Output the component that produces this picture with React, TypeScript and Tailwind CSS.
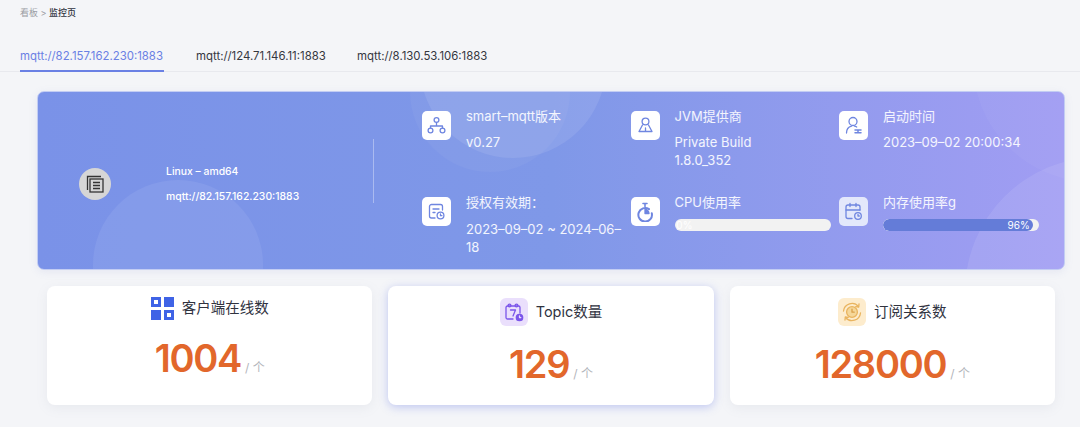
import type { ReactNode } from "react"

const font = "font-['Inter','Noto_Sans_CJK_SC',sans-serif]"

function IconBox({ children, className = "bg-white" }: { children: ReactNode; className?: string }) {
  return (
    <div className={`flex h-[29px] w-[29px] shrink-0 items-center justify-center rounded-[5px] ${className}`}>
      <svg width="21" height="21" viewBox="0 0 21 21" fill="none" stroke="#6f86e0" strokeWidth="1.3" strokeLinecap="round" strokeLinejoin="round">
        {children}
      </svg>
    </div>
  )
}

function InfoItem({ icon, title, children, boxClass }: { icon: ReactNode; title: string; children: ReactNode; boxClass?: string }) {
  return (
    <div className="flex gap-[15px]">
      <div className="pt-[4px]">
        <IconBox className={boxClass}>{icon}</IconBox>
      </div>
      <div className="min-w-0 flex-1 text-[13px] leading-[18px] text-white/90">
        <div className="h-[26px]">{title}</div>
        <div className="pt-[1px]">{children}</div>
      </div>
    </div>
  )
}

function Progress({ percent, label }: { percent: number; label: string }) {
  return (
    <div className="mt-[-1px] h-[12px] w-[156px] overflow-hidden rounded-full bg-[#f2f2f2]">
      <div
        className={`flex h-full items-center justify-end rounded-full pr-[3px] text-[10px] leading-none text-white ${percent > 0 ? "bg-[#647cd8]" : ""}`}
        style={{ width: percent > 0 ? `${percent}%` : "21px" }}
      >
        {label}
      </div>
    </div>
  )
}

function StatCard({ icon, title, value, className = "", headerClass = "pt-[12px]", valueClass = "mt-[14px]" }: { icon: ReactNode; title: string; value: string; className?: string; headerClass?: string; valueClass?: string }) {
  return (
    <div className={`h-[119px] flex-1 rounded-[8px] bg-white ${className}`}>
      <div className={`flex items-center justify-center gap-[8px] text-[14.5px] leading-[28px] text-[#30333f] ${headerClass}`}>
        {icon}
        <span>{title}</span>
      </div>
      <div className={`flex items-baseline justify-center ${valueClass}`}>
        <span className="text-[38px] font-semibold leading-[48px] tracking-[-1.3px] text-[#e2672b]">{value}</span>
        <span className="ml-[4px] text-[12px] text-[#b3b5bb]">/ 个</span>
      </div>
    </div>
  )
}

export default function App() {
  return (
    <div className={`h-[427px] w-[1080px] overflow-hidden bg-[#f4f5f8] ${font}`}>
      <div className="px-5 pt-[6px] text-[9px] leading-[13px] text-[#9a9ca3]">
        看板 &gt; <span className="font-medium text-[#30333f]">监控页</span>
      </div>

      <div className="mt-[25px] flex h-[28px] gap-[32px] border-b border-[#e8e9ee] px-5 text-[11.4px] leading-[24px] text-[#35373e]">
        <div className="h-[28px] w-[144px] whitespace-nowrap border-b-2 border-[#6a80e4] text-[#6a80e4]">mqtt://82.157.162.230:1883</div>
        <div className="w-[129px] whitespace-nowrap">mqtt://124.71.146.11:1883</div>
        <div className="w-[130px] whitespace-nowrap">mqtt://8.130.53.106:1883</div>
      </div>

      <div className="relative ml-[37px] mt-[19px] flex h-[179px] w-[1028px] overflow-hidden rounded-[7px] border border-[#c3cdf3] bg-gradient-to-r from-[#7a92e8] via-[#7f98e8] to-[#a19df3] shadow-[0_2px_8px_rgba(120,130,200,0.12)]">
        <div className="absolute left-[55px] top-[88px] h-[200px] w-[170px] rounded-full bg-white/[0.07]" />
        <div className="absolute left-[372px] top-[-110px] h-[190px] w-[160px] rounded-full bg-white/[0.04]" />
        <div className="absolute left-[382px] top-[-130px] h-[196px] w-[186px] rounded-full bg-white/[0.09]" />
        <div className="absolute left-[927px] top-[65px] h-[270px] w-[270px] rounded-full bg-white/[0.09]" />
        <div className="absolute left-[935px] top-[-150px] h-[240px] w-[240px] rounded-full bg-white/[0.04]" />

        <div className="relative flex w-[336px] items-center pl-[41px] pt-[6px]">
          <div className="flex h-8 w-8 items-center justify-center rounded-full bg-[#d6d6d6]">
            <svg width="22" height="22" viewBox="0 0 22 22" fill="none" stroke="#333" strokeWidth="1.3">
              <path d="M17 3.5H3.5V17" />
              <rect x="6" y="6" width="13" height="13" />
              <path d="M9 9.5h7M9 12.5h7M9 15.5h7" strokeWidth="1.6" />
            </svg>
          </div>
          <div className="ml-[55px] text-[10.4px] font-medium leading-[25px] text-white">
            <div>Linux – amd64</div>
            <div>mqtt://82.157.162.230:1883</div>
          </div>
          <div className="absolute right-0 top-[47px] h-[64px] w-px bg-white/35" />
        </div>

        <div className="relative grid flex-1 grid-cols-[208.5px_208.5px_1fr] grid-rows-[86px_1fr] pl-[48px] pt-[15px]">
          <InfoItem
            title="smart–mqtt版本"
            icon={
              <>
                <circle cx="10.5" cy="5" r="2.4" />
                <circle cx="4.5" cy="15.5" r="2.4" />
                <circle cx="16.5" cy="15.5" r="2.4" />
                <path d="M10.5 7.5v3.5M4.5 13v-2h12v2" />
              </>
            }
          >
            <div className="-mt-[1px]">v0.27</div>
          </InfoItem>
          <InfoItem
            title="JVM提供商"
            icon={
              <>
                <circle cx="10.5" cy="6.5" r="3.4" />
                <path d="M7.5 10 4 16.5h13L13.5 10M10.5 13v3.5" />
              </>
            }
          >
            <div className="-mt-[1px]">Private Build</div>
            <div>1.8.0_352</div>
          </InfoItem>
          <InfoItem
            title="启动时间"
            icon={
              <>
                <circle cx="10" cy="6.5" r="4" />
                <path d="M3.5 18c0-3.6 2-6 5-6.8M11.500 11.200c.8.100 1.600.400 2.200.800" />
                <path d="M12 15h6M12 17.800h6M15 15v2.800" strokeWidth="1.500" />
              </>
            }
          >
            <div className="-mt-[1px]">2023–09–02 20:00:34</div>
          </InfoItem>
          <InfoItem
            title="授权有效期："
            icon={
              <>
                <path d="M9 17H5.500a2 2 0 0 1-2-2V5.500a2 2 0 0 1 2-2h9a2 2 0 0 1 2 2V9" />
                <path d="M7 8h6M7 11.500h2" />
                <circle cx="14.500" cy="14.500" r="3.400" />
                <path d="M14.500 13v1.700h1.400" />
              </>
            }
          >
            2023–09–02 ~ 2024–06–18
          </InfoItem>
          <InfoItem
            title="CPU使用率"
            icon={
              <>
                <path d="M8 2.500h4M10 2.500v3" strokeWidth="1.600" />
                <path d="M14 8.200A6.800 6.800 0 1 0 16.800 12.300" strokeWidth="2" />
                <path d="M10 8.500v4h4a4 4 0 0 0-4-4z" fill="#6f86e0" />
              </>
            }
          >
            <Progress percent={0} label="0%" />
          </InfoItem>
          <InfoItem
            title="内存使用率g"
            boxClass="bg-[#e3e8fb]"
            icon={
              <>
                <path d="M9 17.500H5a2 2 0 0 1-2-2V6a2 2 0 0 1 2-2h10a2 2 0 0 1 2 2v3" />
                <path d="M7 2.500v3M13 2.500v3M3 9h14" />
                <circle cx="15" cy="15" r="3.300" />
                <path d="M15 13.500V15h1.300" />
              </>
            }
          >
            <Progress percent={96} label="96%" />
          </InfoItem>
        </div>
      </div>

      <div className="ml-[47px] mt-[16px] flex w-[1008px] gap-[16px]">
        <StatCard
          title="客户端在线数"
          value="1004"
          className="shadow-[0_3px_12px_rgba(130,135,160,0.1)]"
          headerClass="pt-[8px]"
          valueClass="mt-[12px]"
          icon={
            <svg width="23" height="23" viewBox="0 0 23 23" fill="#3f63e6">
              <path fillRule="evenodd" d="M0 0h10v10H0zM3 3v4h4V3z" />
              <rect x="13" y="0" width="10" height="10" />
              <rect x="0" y="13" width="10" height="10" />
              <path fillRule="evenodd" d="M13 13h10v10H13zM16 16v4h4v-4z" />
            </svg>
          }
        />
        <StatCard
          title="Topic数量"
          value="129"
          className="shadow-[0_2px_10px_rgba(90,110,225,0.35)]"
          icon={
            <div className="flex h-[28px] w-[28px] items-center justify-center rounded-[6px] bg-[#eadffc]">
              <svg width="20" height="20" viewBox="0 0 20 20" fill="none" stroke="#7b55ea" strokeWidth="1.300" strokeLinecap="round" strokeLinejoin="round">
                <path d="M9 17H3.500a1.500 1.500 0 0 1-1.500-1.500v-10A1.500 1.500 0 0 1 3.500 4h11A1.500 1.500 0 0 1 16 5.500V11" />
                <circle cx="5.500" cy="3.500" r="1.400" />
                <circle cx="12.500" cy="3.500" r="1.400" />
                <path d="M6.500 8h5l-2.500 6" />
                <circle cx="15.500" cy="15.500" r="3.200" fill="#7b55ea" />
                <path d="M15.500 14v1.600h1.300" stroke="#eadffc" />
              </svg>
            </div>
          }
        />
        <StatCard
          title="订阅关系数"
          value="128000"
          className="shadow-[0_3px_12px_rgba(130,135,160,0.1)]"
          icon={
            <div className="flex h-[28px] w-[28px] items-center justify-center rounded-[6px] bg-[#fdeccd]">
              <svg width="22" height="22" viewBox="0 0 22 22" fill="none" stroke="#e9b45f" strokeWidth="1.300" strokeLinecap="round" strokeLinejoin="round">
                <path d="M2.500 10a8.500 8.500 0 0 1 15-4.500M19.500 12a8.500 8.500 0 0 1-15 4.500" />
                <path d="m18 3-.3 3-3-.3M4 19l.3-3 3 .3" />
                <circle cx="11" cy="11" r="5.400" fill="#f5d799" />
                <path d="M11 8.200v3h2.200" stroke="#d9a04a" />
              </svg>
            </div>
          }
        />
      </div>
    </div>
  )
}
